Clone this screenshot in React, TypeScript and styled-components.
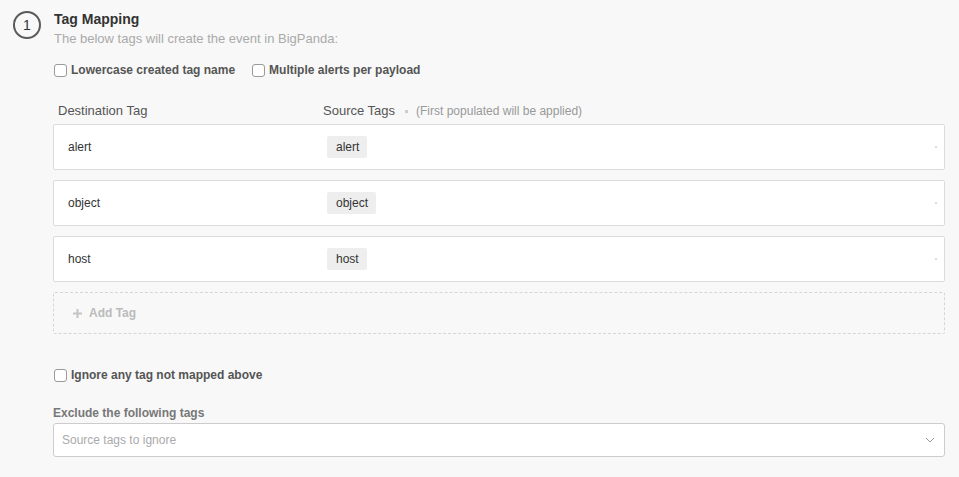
import React from "react";
import styled, { createGlobalStyle } from "styled-components";

const Global = createGlobalStyle`
  html, body { margin: 0; padding: 0; background: #f8f8f8; }
  body { font-family: "Liberation Sans", Arial, sans-serif; color: #333; }
`;

const Page = styled.div`
  display: flex;
  gap: 12px;
  padding: 11px 14px 0 13px;
  width: 959px;
  height: 477px;
  box-sizing: border-box;
`;

const StepCircle = styled.div`
  flex: none;
  width: 28px;
  height: 28px;
  box-sizing: border-box;
  border: 2px solid #5a5a5a;
  border-radius: 50%;
  display: flex;
  align-items: center;
  justify-content: center;
  font-size: 14px;
  color: #333;
`;

const Content = styled.div`
  flex: 1;
  display: flex;
  flex-direction: column;
  min-width: 0;
`;

const Title = styled.div`
  font-size: 14px;
  font-weight: bold;
  color: #333;
  line-height: 16px;
  margin-left: 1px;
`;

const Subtitle = styled.div`
  font-size: 13px;
  color: #aaa;
  line-height: 16px;
  margin-top: 4px;
  margin-left: 1px;
`;

const CheckRow = styled.div`
  display: flex;
  gap: 17px;
  margin-top: 16px;
  margin-left: 1px;
`;

const CheckLabel = styled.label`
  display: flex;
  align-items: center;
  gap: 4px;
  font-size: 12px;
  font-weight: bold;
  color: #555;
  line-height: 14px;
`;

const Box = styled.span`
  width: 13px;
  height: 13px;
  box-sizing: border-box;
  border: 1px solid #9a9a9a;
  border-radius: 3px;
  background: #fff;
`;

const HeaderRow = styled.div`
  display: grid;
  grid-template-columns: 265px 1fr;
  padding-left: 5px;
  margin-top: 26px;
  align-items: center;
  line-height: 16px;
`;

const HeaderCell = styled.div`
  display: flex;
  align-items: center;
  font-size: 13px;
  color: #555;
`;

const Dot = styled.span`
  width: 3px;
  height: 3px;
  background: #ccc;
  margin: 0 8px 0 10px;
`;

const Hint = styled.span`
  font-size: 12px;
  color: #999;
`;

const Rows = styled.div`
  display: flex;
  flex-direction: column;
  gap: 10px;
  margin-top: 5px;
`;

const Row = styled.div`
  position: relative;
  display: grid;
  grid-template-columns: 259px 1fr;
  align-items: center;
  height: 46px;
  box-sizing: border-box;
  padding-left: 14px;
  background: #fff;
  border: 1px solid #dcdcdc;
  border-radius: 2px;
`;

const DestText = styled.div`
  font-size: 12px;
  color: #333;
`;

const Chip = styled.span`
  justify-self: start;
  background: #eee;
  border-radius: 2px;
  padding: 0 8px 0 9px;
  height: 22px;
  line-height: 22px;
  font-size: 12px;
  color: #333;
`;

const CornerMark = styled.span`
  position: absolute;
  right: 7px;
  top: 21px;
  width: 2px;
  height: 2px;
  background: #ddd;
`;

const AddTag = styled.div`
  margin-top: 10px;
  height: 42px;
  box-sizing: border-box;
  border: 1px dashed #d6d6d6;
  border-radius: 2px;
  display: flex;
  align-items: center;
  padding-left: 18px;
  gap: 6px;
  font-size: 12px;
  font-weight: bold;
  color: #bbb;
`;

const Plus = styled.svg`
  width: 11px;
  height: 11px;
`;

const IgnoreRow = styled.div`
  margin-top: 34px;
  margin-left: 1px;
  display: flex;
`;

const FieldLabel = styled.div`
  margin-top: 24px;
  font-size: 12px;
  font-weight: bold;
  color: #777;
  line-height: 14px;
`;

const Select = styled.div`
  margin-top: 3px;
  height: 34px;
  box-sizing: border-box;
  border: 1px solid #ccc;
  border-radius: 3px;
  background: #fff;
  display: flex;
  align-items: center;
  justify-content: space-between;
  padding: 0 8px 0 8px;
  font-size: 12px;
  color: #aaa;
`;

const Chevron = styled.svg`
  width: 10px;
  height: 6px;
  margin-right: 1px;
`;

const rows = ["alert", "object", "host"];

export default function App() {
  return (
    <>
      <Global />
      <Page>
        <StepCircle>1</StepCircle>
        <Content>
          <Title>Tag Mapping</Title>
          <Subtitle>The below tags will create the event in BigPanda:</Subtitle>
          <CheckRow>
            <CheckLabel>
              <Box />
              Lowercase created tag name
            </CheckLabel>
            <CheckLabel>
              <Box />
              Multiple alerts per payload
            </CheckLabel>
          </CheckRow>
          <HeaderRow>
            <HeaderCell>Destination Tag</HeaderCell>
            <HeaderCell>
              Source Tags
              <Dot />
              <Hint>(First populated will be applied)</Hint>
            </HeaderCell>
          </HeaderRow>
          <Rows>
            {rows.map((r) => (
              <Row key={r}>
                <DestText>{r}</DestText>
                <Chip>{r}</Chip>
                <CornerMark />
              </Row>
            ))}
          </Rows>
          <AddTag>
            <Plus viewBox="0 0 11 11">
              <path d="M5.5 1v9M1 5.5h9" stroke="#c4c4c4" strokeWidth="2" />
            </Plus>
            Add Tag
          </AddTag>
          <IgnoreRow>
            <CheckLabel>
              <Box />
              Ignore any tag not mapped above
            </CheckLabel>
          </IgnoreRow>
          <FieldLabel>Exclude the following tags</FieldLabel>
          <Select>
            Source tags to ignore
            <Chevron viewBox="0 0 10 6">
              <path d="M1 1l4 4 4-4" fill="none" stroke="#999" strokeWidth="1" />
            </Chevron>
          </Select>
        </Content>
      </Page>
    </>
  );
}
